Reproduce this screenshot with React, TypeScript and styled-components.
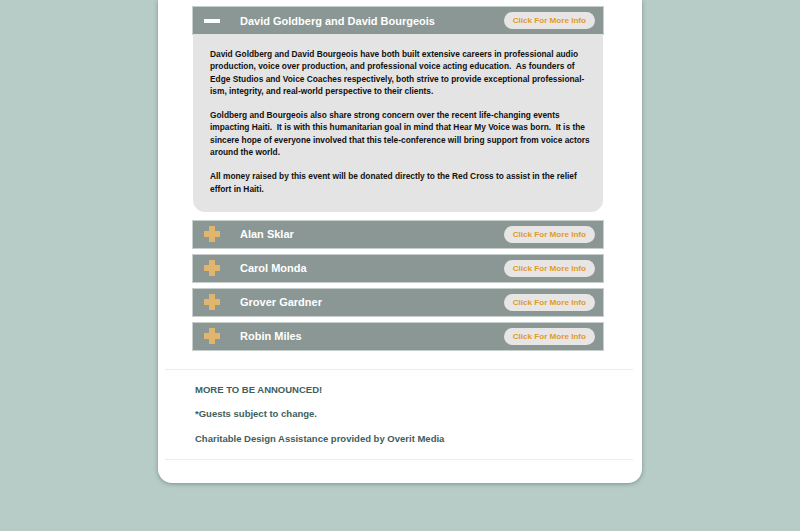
import styled, { createGlobalStyle } from "styled-components";

type Guest = {
  name: string;
  open?: boolean;
  bio?: string[];
};

const guests: Guest[] = [
  {
    name: "David Goldberg and David Bourgeois",
    open: true,
    bio: [
      "David Goldberg and David Bourgeois have both built extensive careers in professional audio production, voice over production, and professional voice acting education.\u00a0 As founders of Edge Studios and Voice Coaches respectively, both strive to provide exceptional professional-ism, integrity, and real-world perspective to their clients.",
      "Goldberg and Bourgeois also share strong concern over the recent life-changing events impacting Haiti.\u00a0 It is with this humanitarian goal in mind that Hear My Voice was born.\u00a0 It is the sincere hope of everyone involved that this tele-conference will bring support from voice actors around the world.",
      "All money raised by this event will be donated directly to the Red Cross to assist in the relief effort in Haiti.",
    ],
  },
  { name: "Alan Sklar" },
  { name: "Carol Monda" },
  { name: "Grover Gardner" },
  { name: "Robin Miles" },
];

const GlobalStyle = createGlobalStyle`
  html, body {
    margin: 0;
    padding: 0;
    background: #b8ccc7;
    font-family: "Liberation Sans", Arial, sans-serif;
  }
`;

const App = () => {
  return (
    <>
      <GlobalStyle />
      <Page>
        <Card>
          <List>
            {guests.map((guest) => (
              <Item key={guest.name} $open={guest.open}>
                <Header>
                  <Toggle>{guest.open ? <Minus /> : <Plus />}</Toggle>
                  <Name>{guest.name}</Name>
                  <InfoButton>Click For More Info</InfoButton>
                </Header>
                {guest.open && guest.bio && (
                  <Panel>
                    {guest.bio.map((p) => (
                      <Para key={p.slice(0, 20)}>{p}</Para>
                    ))}
                  </Panel>
                )}
              </Item>
            ))}
          </List>
          <Footer>
            <Note>MORE TO BE ANNOUNCED!</Note>
            <Note>*Guests subject to change.</Note>
            <Note>Charitable Design Assistance provided by Overit Media</Note>
          </Footer>
        </Card>
      </Page>
    </>
  );
};

export default App;

const Page = styled.div`
  width: 800px;
  height: 531px;
  overflow: hidden;
`;

const Card = styled.div`
  width: 484px;
  margin: 0 auto;
  background: #ffffff;
  border-radius: 0 0 14px 14px;
  box-shadow: 0 1px 4px rgba(60, 90, 85, 0.5);
  padding: 7px 0 23px;
  box-sizing: border-box;
`;

const List = styled.div`
  display: flex;
  flex-direction: column;
  gap: 7px;
  width: 410px;
  margin-left: 35px;
`;

const Item = styled.div<{ $open?: boolean }>`
  display: flex;
  flex-direction: column;
  margin-bottom: ${(p) => (p.$open ? "2px" : "0")};
`;

const Header = styled.div`
  display: flex;
  align-items: center;
  height: 27px;
  background: #8a9794;
  box-shadow: 0 0 0 1px #c7cfcd;
  padding: 0 8px 0 10px;
`;

const Toggle = styled.div`
  width: 18px;
  height: 18px;
  display: flex;
  align-items: center;
  justify-content: center;
`;

const Minus = styled.span`
  width: 16px;
  height: 4px;
  background: #ffffff;
`;

const Plus = styled.span`
  position: relative;
  width: 16px;
  height: 16px;
  &::before,
  &::after {
    content: "";
    position: absolute;
    background: #e2b56c;
  }
  &::before {
    left: 0;
    top: 5px;
    width: 16px;
    height: 6px;
  }
  &::after {
    left: 5px;
    top: 0;
    width: 6px;
    height: 16px;
  }
`;

const Name = styled.div`
  flex: 1;
  margin-left: 19px;
  color: #ffffff;
  font-size: 11px;
  font-weight: bold;
`;

const InfoButton = styled.button`
  height: 17px;
  padding: 0 9px;
  border: none;
  border-radius: 9px;
  background: #e7e6e4;
  color: #e09a2c;
  font-family: "Liberation Sans", Arial, sans-serif;
  font-size: 8.1px;
  font-weight: bold;
  cursor: pointer;
`;

const Panel = styled.div`
  background: #e4e4e4;
  border-radius: 0 0 12px 12px;
  padding: 14px 13px 17px 17px;
`;

const Para = styled.p`
  margin: 0 0 12px;
  font-size: 8.35px;
  font-weight: bold;
  line-height: 12.3px;
  color: #111111;
  &:last-child {
    margin-bottom: 0;
  }
`;

const Footer = styled.div`
  margin: 19px 9px 0 7px;
  padding: 14px 30px 15px 30px;
  border-top: 1px solid #e6efee;
  border-bottom: 1px solid #e6efee;
  display: flex;
  flex-direction: column;
  gap: 13.5px;
`;

const Note = styled.div`
  color: #3e605d;
  font-size: 9.5px;
  line-height: 11px;
  font-weight: bold;
`;
